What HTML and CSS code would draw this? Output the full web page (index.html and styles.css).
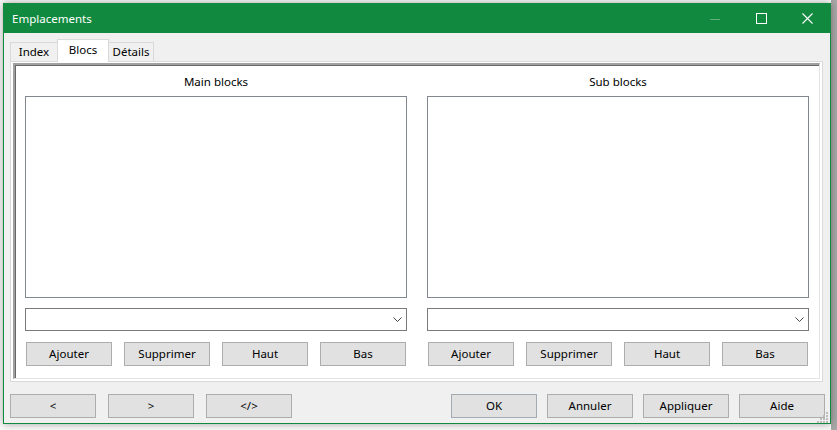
FILE: index.html
```html
<!DOCTYPE html>
<html lang="fr">
<head>
    <meta charset="UTF-8">
    <title>Emplacements</title>
    <link rel="stylesheet" href="styles.css">
</head>
<body>

    <div class="window">
        <!-- barre de titre -->
        <div class="titlebar">
            <span class="title">Emplacements</span>
            <div class="controls">
                <div class="control">
                    <svg width="10" height="10" viewBox="0 0 10 10"><line x1="0" y1="5.5" x2="10" y2="5.5" stroke="#5fae7e" stroke-width="1"/></svg>
                </div>
                <div class="control">
                    <svg width="11" height="11" viewBox="0 0 11 11"><rect x="0.5" y="0.5" width="10" height="10" fill="none" stroke="#fff" stroke-width="1"/></svg>
                </div>
                <div class="control">
                    <svg width="11" height="11" viewBox="0 0 11 11"><path d="M0.5 0.5 L10.5 10.5 M10.5 0.5 L0.5 10.5" stroke="#fff" stroke-width="1.1"/></svg>
                </div>
            </div>
        </div>

        <div class="client">
            <!-- onglets -->
            <div class="tabs">
                <div class="tab tab-index">Index</div>
                <div class="tab tab-blocs active">Blocs</div>
                <div class="tab tab-details">Détails</div>
            </div>

            <div class="page">
                <div class="inset">
                    <div class="column">
                        <div class="caption">Main blocks</div>
                        <div class="listbox"></div>
                        <div class="combo">
                            <svg width="9" height="5" viewBox="0 0 9 5"><polyline points="0.5,0.5 4.5,4.5 8.5,0.5" fill="none" stroke="#444" stroke-width="1"/></svg>
                        </div>
                        <div class="buttons">
                            <button class="btn">Ajouter</button>
                            <button class="btn">Supprimer</button>
                            <button class="btn">Haut</button>
                            <button class="btn">Bas</button>
                        </div>
                    </div>
                    <div class="column">
                        <div class="caption">Sub blocks</div>
                        <div class="listbox"></div>
                        <div class="combo">
                            <svg width="9" height="5" viewBox="0 0 9 5"><polyline points="0.5,0.5 4.5,4.5 8.5,0.5" fill="none" stroke="#444" stroke-width="1"/></svg>
                        </div>
                        <div class="buttons">
                            <button class="btn">Ajouter</button>
                            <button class="btn">Supprimer</button>
                            <button class="btn">Haut</button>
                            <button class="btn">Bas</button>
                        </div>
                    </div>
                </div>
            </div>

            <!-- boutons du bas -->
            <div class="footer">
                <div class="group nav">
                    <button class="btn">&lt;</button>
                    <button class="btn">&gt;</button>
                    <button class="btn">&lt;/&gt;</button>
                </div>
                <div class="group actions">
                    <button class="btn default">OK</button>
                    <button class="btn">Annuler</button>
                    <button class="btn">Appliquer</button>
                    <button class="btn">Aide</button>
                </div>
            </div>

            <svg class="grip" width="12" height="12" viewBox="0 0 12 12">
                <rect x="9" y="1" width="2" height="2" fill="#bcbcbc"/>
                <rect x="6" y="4" width="2" height="2" fill="#bcbcbc"/>
                <rect x="9" y="4" width="2" height="2" fill="#bcbcbc"/>
                <rect x="3" y="7" width="2" height="2" fill="#bcbcbc"/>
                <rect x="6" y="7" width="2" height="2" fill="#bcbcbc"/>
                <rect x="9" y="7" width="2" height="2" fill="#bcbcbc"/>
                <rect x="0" y="10" width="2" height="2" fill="#bcbcbc"/>
                <rect x="3" y="10" width="2" height="2" fill="#bcbcbc"/>
                <rect x="6" y="10" width="2" height="2" fill="#bcbcbc"/>
                <rect x="9" y="10" width="2" height="2" fill="#bcbcbc"/>
            </svg>
        </div>
    </div>

</body>
</html>
```

FILE: styles.css
```css
html, body {
    margin: 0;
    height: 100%;
}

body {
    background: linear-gradient(to right, #fafafa 831px, #a8a8a8 831px);
    font-family: "Noto Sans", "Open Sans", sans-serif;
    font-size: 11.5px;
    color: #000;
    overflow: hidden;
}

/* fenêtre */
.window {
    margin: 3px 0 0 3px;
    width: 828px;
    height: 421px;
    box-sizing: border-box;
    border: 1px solid #118a3f;
    background-color: #f0f0f0;
    box-shadow: 0 0 8px rgba(0, 0, 0, 0.35);
    display: flex;
    flex-direction: column;
}

.titlebar {
    height: 29px;
    background-color: #118a3f;
    display: flex;
    align-items: center;
    justify-content: space-between;
    flex-shrink: 0;
}

.title {
    color: #fff;
    font-size: 11.5px;
    padding-left: 8px;
    padding-bottom: 1px;
}

.controls {
    display: flex;
    height: 100%;
}

.control {
    width: 46px;
    display: flex;
    align-items: center;
    justify-content: center;
}

.control svg {
    display: block;
}

.client {
    flex: 1;
    position: relative;
    padding: 6px 5px 0 6px;
}

/* onglets */
.tabs {
    display: flex;
    align-items: flex-end;
}

.tab {
    box-sizing: border-box;
    height: 19px;
    border: 1px solid #d9d9d9;
    border-bottom: none;
    background-color: #f0f0f0;
    display: flex;
    align-items: center;
    justify-content: center;
    padding-bottom: 1px;
}

.tab-index {
    width: 47px;
    border-right: none;
}

.tab-blocs {
    width: 52px;
}

.tab-details {
    width: 45px;
    border-left: none;
}

.tab.active {
    height: 23px;
    background-color: #fff;
    margin-bottom: -1px;
    padding-bottom: 4px;
    position: relative;
    z-index: 1;
}

.page {
    box-sizing: border-box;
    width: 813px;
    height: 321px;
    border: 1px solid #d9d9d9;
    background-color: #fff;
    padding: 1px 2px 2px 2px;
}

.inset {
    box-sizing: border-box;
    height: 100%;
    border-top: 2px solid #a0a0a0;
    border-left: 2px solid #a0a0a0;
    border-right: 1px solid #e3e3e3;
    border-bottom: 1px solid #e3e3e3;
    box-shadow: inset 1px 1px 0 #696969;
    display: flex;
    gap: 20px;
    padding: 0 10px 0 10px;
}

.column {
    width: 382px;
    display: flex;
    flex-direction: column;
}

.caption {
    text-align: center;
    line-height: 16px;
    padding-top: 9px;
    margin-bottom: 6px;
}

.listbox {
    box-sizing: border-box;
    height: 202px;
    border: 1px solid #828790;
    background-color: #fff;
}

.combo {
    box-sizing: border-box;
    height: 23px;
    margin-top: 10px;
    border: 1px solid #7a7a7a;
    background-color: #fff;
    display: flex;
    align-items: center;
    justify-content: flex-end;
    padding-right: 4px;
}

.combo svg {
    display: block;
}

.buttons {
    display: flex;
    gap: 12px;
    margin-top: 11px;
    padding-left: 1px;
}

/* boutons */
.btn {
    box-sizing: border-box;
    width: 86px;
    height: 24px;
    margin: 0;
    padding: 0 0 1px 0;
    border: 1px solid #adadad;
    background-color: #e1e1e1;
    font-family: "Noto Sans", "Open Sans", sans-serif;
    font-size: 11.5px;
    color: #000;
}

.btn.default {
    border-color: #a3aab3;
}

.footer {
    display: flex;
    justify-content: space-between;
    padding-top: 12px;
}

.group {
    display: flex;
}

.nav {
    gap: 12px;
}

.actions {
    gap: 10px;
}

.grip {
    position: absolute;
    right: 1px;
    bottom: 0;
}
```
